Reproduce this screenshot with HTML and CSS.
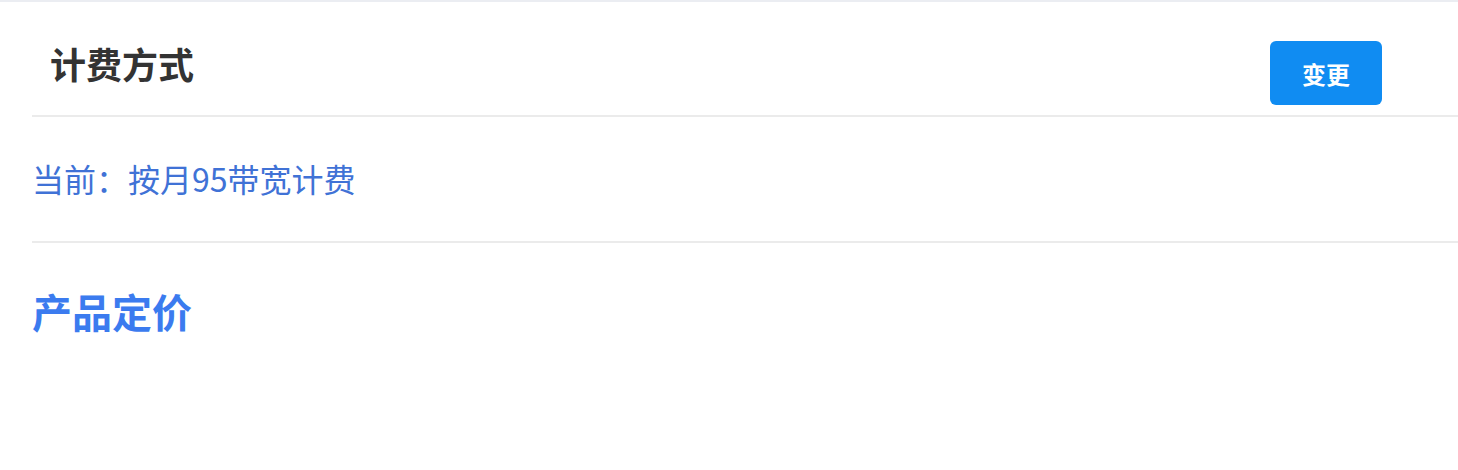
FILE: index.html
```html
<!DOCTYPE html>
<html lang="zh-CN">
<head>
  <meta charset="UTF-8">
  <title>计费方式</title>
  <link rel="stylesheet" href="styles.css">
</head>
<body>
  <div class="panel">
    <div class="panel-head">
      <h2 class="panel-title">计费方式</h2>
      <button class="btn-change">变更</button>
    </div>
    <div class="current">当前：按月95带宽计费</div>
    <h3 class="section-title">产品定价</h3>
  </div>
</body>
</html>
```

FILE: styles.css
```css
body {
  margin: 0;
  font-family: "Noto Sans CJK SC", "Noto Sans", sans-serif;
  background: #ffffff;
  border-top: 2px solid #ebedf2;
}
.panel {
  padding-left: 32px;
}
.panel-head {
  display: flex;
  justify-content: space-between;
  align-items: flex-start;
  padding: 39px 76px 10px 18px;
  border-bottom: 2px solid #ebebeb;
}
.panel-title {
  margin: 0;
  font-size: 36px;
  line-height: 44px;
  font-weight: 700;
  color: #333333;
}
.btn-change {
  width: 112px;
  height: 64px;
  border: none;
  border-radius: 6px;
  background: #108cf2;
  color: #ffffff;
  font-family: inherit;
  font-size: 24px;
  font-weight: 700;
  cursor: pointer;
}
.current {
  padding: 39px 0 41px;
  font-size: 32px;
  line-height: 44px;
  color: #4072d6;
  border-bottom: 2px solid #ebebeb;
}
.section-title {
  margin: 40px 0 0;
  font-size: 40px;
  line-height: 56px;
  font-weight: 700;
  color: #3b7bef;
}
```
